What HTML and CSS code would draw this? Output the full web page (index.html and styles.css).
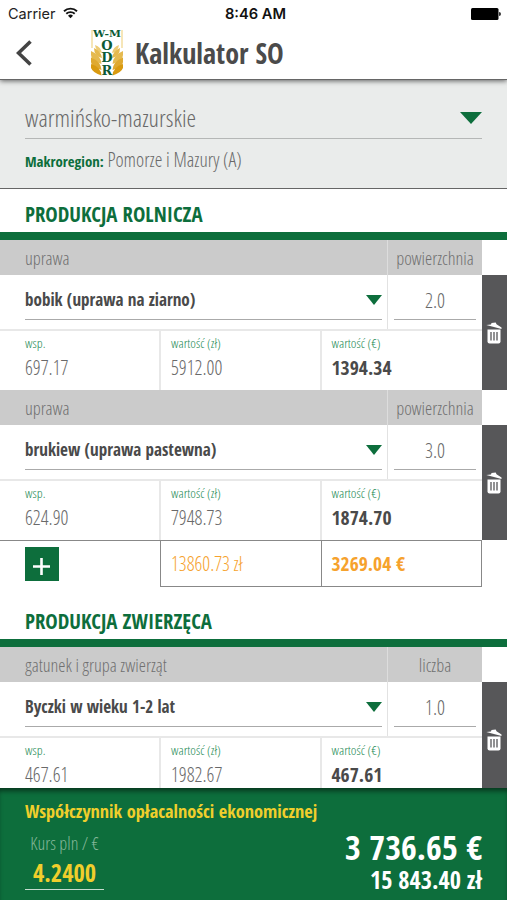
FILE: index.html
```html
<!DOCTYPE html>
<html lang="pl">
<head>
  <meta charset="UTF-8" />
  <meta name="viewport" content="width=device-width, initial-scale=1.0"/>
  <title>Kalkulator SO</title>
  <link rel="stylesheet" href="styles.css">
</head>
<body>

  <header class="top">
    <div class="status">
      <div class="carrier">
        <span>Carrier</span>
        <svg class="wifi" width="15" height="12" viewBox="0 0 15 12">
          <path d="M1 4.3a9.3 9.3 0 0 1 13 0M3.3 6.8a6 6 0 0 1 8.4 0" fill="none" stroke="#111" stroke-width="1.9"/>
          <path d="M7.5 11.3 5 8.8a3.6 3.6 0 0 1 5 0z" fill="#111"/>
        </svg>
      </div>
      <div class="clock">8:46 AM</div>
      <svg class="battery" width="30" height="12" viewBox="0 0 30 12">
        <rect width="27.5" height="12" rx="1.5" fill="#000"/>
        <path d="M28 4q2 0 2 2t-2 2z" fill="#333"/>
      </svg>
    </div>
    <div class="navbar">
      <svg class="back" width="17" height="26" viewBox="0 0 17 26">
        <path d="M14.5 1.5 2.5 13l12 11.5" fill="none" stroke="#444" stroke-width="3.6"/>
      </svg>
      <svg class="logo" width="32" height="48" viewBox="0 0 32 48">
        <path d="M0 1h2v18H0zM30 1h2v18h-2z" fill="#f6e6b8"/>
        <g id="ear">
          <path d="M4 16q6 2 7 8-6-1-7-8z" fill="#eccb74"/>
          <path d="M3 19q7 3 8 10-8-2-8-10z" fill="#e5b94e"/>
          <path d="M0 22q10 4 10.500 13Q0 32 0 26z" fill="#e5ba50"/>
          <path d="M0 28.500q10 4 10.500 12.500Q0 38 0 33z" fill="#dfa930"/>
          <path d="M0 35q10 3 10.500 11.500Q2 44 0 39z" fill="#d99a10"/>
        </g>
        <use href="#ear" transform="matrix(-1 0 0 1 32 0)"/>
        <text class="logo-wm" x="16" y="7.5" textLength="28" lengthAdjust="spacingAndGlyphs">W-M</text>
        <text class="logo-odr" x="16" y="20.5">O</text>
        <text class="logo-odr" x="16" y="33">D</text>
        <text class="logo-odr" x="16" y="46">R</text>
      </svg>
      <h1>Kalkulator SO</h1>
    </div>
  </header>

  <section class="region">
    <div class="region-select">
      <span>warmińsko-mazurskie</span>
      <i class="arrow big"></i>
    </div>
    <p class="macro"><b>Makroregion:</b> <span>Pomorze i Mazury (A)</span></p>
  </section>

  <main>
    <h2>PRODUKCJA ROLNICZA</h2>

    <div class="item">
      <div class="labels"><span>uprawa</span><span>powierzchnia</span></div>
      <div class="content">
        <div class="data">
          <div class="choice">
            <div class="select"><span class="name">bobik (uprawa na ziarno)</span><i class="arrow"></i></div>
            <div class="amount"><span>2.0</span></div>
          </div>
          <div class="values">
            <div><small>wsp.</small><span>697.17</span></div>
            <div><small>wartość (zł)</small><span>5912.00</span></div>
            <div><small>wartość (€)</small><b>1394.34</b></div>
          </div>
        </div>
        <div class="remove">
          <svg width="16" height="22" viewBox="0 0 16 22">
            <path d="M.3 3 5 2.600 5.500 1l4.200-.5.8 1.800 5 3.200v1.500z" fill="#fff"/>
            <path d="M1.500 7.500h13v12q0 2-2 2h-9q-2 0-2-2z" fill="#fff"/>
            <path d="M5 10v8.500M8 10v8.500M11 10v8.500" stroke="#575759" stroke-width="1.3"/>
          </svg>
        </div>
      </div>
    </div>

    <div class="item">
      <div class="labels"><span>uprawa</span><span>powierzchnia</span></div>
      <div class="content">
        <div class="data">
          <div class="choice">
            <div class="select"><span class="name">brukiew (uprawa pastewna)</span><i class="arrow"></i></div>
            <div class="amount"><span>3.0</span></div>
          </div>
          <div class="values">
            <div><small>wsp.</small><span>624.90</span></div>
            <div><small>wartość (zł)</small><span>7948.73</span></div>
            <div><small>wartość (€)</small><b>1874.70</b></div>
          </div>
        </div>
        <div class="remove">
          <svg width="16" height="22" viewBox="0 0 16 22">
            <path d="M.3 3 5 2.600 5.500 1l4.200-.5.8 1.800 5 3.200v1.500z" fill="#fff"/>
            <path d="M1.500 7.500h13v12q0 2-2 2h-9q-2 0-2-2z" fill="#fff"/>
            <path d="M5 10v8.500M8 10v8.500M11 10v8.500" stroke="#575759" stroke-width="1.3"/>
          </svg>
        </div>
      </div>
    </div>

    <div class="total">
      <div class="add">
        <svg width="34" height="34" viewBox="0 0 34 34">
          <path d="M8 19.500h17M16.500 11v17" stroke="#fff" stroke-width="2.6"/>
        </svg>
      </div>
      <div class="sum"><span>13860.73 zł</span></div>
      <div class="sum"><b>3269.04 €</b></div>
    </div>

    <h2>PRODUKCJA ZWIERZĘCA</h2>

    <div class="item">
      <div class="labels"><span>gatunek i grupa zwierząt</span><span>liczba</span></div>
      <div class="content">
        <div class="data">
          <div class="choice">
            <div class="select"><span class="name">Byczki w wieku 1-2 lat</span><i class="arrow"></i></div>
            <div class="amount"><span>1.0</span></div>
          </div>
          <div class="values">
            <div><small>wsp.</small><span>467.61</span></div>
            <div><small>wartość (zł)</small><span>1982.67</span></div>
            <div><small>wartość (€)</small><b>467.61</b></div>
          </div>
        </div>
        <div class="remove">
          <svg width="16" height="22" viewBox="0 0 16 22">
            <path d="M.3 3 5 2.600 5.500 1l4.200-.5.8 1.800 5 3.200v1.500z" fill="#fff"/>
            <path d="M1.500 7.500h13v12q0 2-2 2h-9q-2 0-2-2z" fill="#fff"/>
            <path d="M5 10v8.500M8 10v8.500M11 10v8.500" stroke="#575759" stroke-width="1.3"/>
          </svg>
        </div>
      </div>
    </div>
  </main>

  <footer>
    <h3>Współczynnik opłacalności ekonomicznej</h3>
    <div class="summary">
      <div class="rate">
        <span>Kurs pln / €</span>
        <b>4.2400</b>
      </div>
      <div class="result">
        <b class="eur">3 736.65 €</b>
        <b class="pln">15 843.40 zł</b>
      </div>
    </div>
  </footer>

</body>
</html>
```

FILE: styles.css
```css
* {
  box-sizing: border-box;
}

body {
  margin: 0;
  height: 900px;
  display: flex;
  flex-direction: column;
  overflow: hidden;
  background: #fff;
  color: #696969;
  font-family: "Open Sans Condensed Light", "Open Sans", sans-serif;
  font-stretch: 75%;
  font-weight: 300;
}

h1, h2, h3, p {
  margin: 0;
}

h1, h2, h3, b, .name {
  font-family: "Open Sans Condensed", "Open Sans", sans-serif;
  font-weight: 700;
}

/* header */
.top {
  flex: none;
  height: 80px;
  background: #fff;
  border-bottom: 1px solid #666;
  box-shadow: 0 1px 5px rgba(0, 0, 0, 0.6);
  z-index: 2;
}

.status {
  height: 27px;
  display: grid;
  grid-template-columns: 1fr auto 1fr;
  align-items: center;
  padding: 0 6px 0 8px;
  font-family: Inter, "Liberation Sans", sans-serif;
  font-stretch: 100%;
  font-size: 14.5px;
  color: #222;
}

.carrier {
  display: flex;
  align-items: center;
  gap: 7px;
  font-weight: 400;
}

.wifi {
  margin-top: -2px;
}

.clock {
  font-weight: 600;
  font-size: 14.7px;
  padding-left: 2px;
  color: #111;
}

.battery {
  justify-self: end;
}

.navbar {
  display: flex;
  align-items: center;
  height: 52px;
  padding-left: 16px;
}

.logo {
  margin: 0 12px 0 58px;
}

.logo-wm, .logo-odr {
  font-family: "DejaVu Serif", serif;
  font-weight: 700;
  font-stretch: 100%;
  fill: #0b5a35;
  text-anchor: middle;
}

.logo-wm {
  font-size: 9px;
}

.logo-odr {
  font-size: 13px;
}

h1 {
  font-size: 28px;
  line-height: 50px;
  color: #4b4b4b;
}

/* region */
.region {
  flex: none;
  height: 109px;
  padding: 18px 25px 0;
  background: #eaeceb;
  border-bottom: 1px solid #666;
}

.region-select {
  display: flex;
  align-items: center;
  justify-content: space-between;
  height: 41px;
  padding-bottom: 1px;
  border-bottom: 1px solid #b5b7b6;
  font-size: 24.5px;
}

.arrow {
  border-left: 8px solid transparent;
  border-right: 8px solid transparent;
  border-top: 10px solid #0d6e3c;
}

.arrow.big {
  border-left-width: 11px;
  border-right-width: 11px;
  border-top-width: 12px;
}

.macro {
  font-size: 19.6px;
  line-height: 42px;
}

.macro b {
  font-size: 14.8px;
  color: #0d6e3c;
}

/* production lists */
main {
  flex: 1;
  min-height: 0;
  overflow: hidden;
}

h2 {
  height: 51px;
  border-bottom: 8px solid #0d6e3c;
  padding-left: 25px;
  font-size: 20.8px;
  line-height: 50px;
  color: #0d6e3c;
}

.labels {
  display: flex;
  width: 482px;
  height: 35px;
  background: #cbcbcb;
  font-size: 18.4px;
  line-height: 35px;
  color: #707070;
}

.labels span:first-child {
  flex: 1;
  padding-left: 25px;
}

.labels span:last-child {
  width: 95px;
  border-left: 1px solid #ddd;
  text-align: center;
}

.content {
  display: flex;
  height: 115px;
}

.data {
  width: 482px;
}

.choice {
  display: flex;
  height: 56px;
  border-bottom: 2px solid #e8e8e8;
}

.select {
  flex: 1;
  height: 45px;
  margin: 0 5px 0 25px;
  display: flex;
  justify-content: space-between;
  border-bottom: 1px solid #aaa;
}

.name {
  font-size: 17.1px;
  line-height: 50px;
  color: #4a4a4a;
}

.select .arrow {
  margin-top: 20px;
  height: 10px;
}

.amount {
  width: 95px;
  border-left: 1px solid #e2e2e2;
  padding: 0 6px;
}

.amount span {
  display: block;
  height: 45px;
  border-bottom: 1px solid #aaa;
  text-align: center;
  font-size: 20px;
  line-height: 51px;
}

.values {
  display: grid;
  grid-template-columns: 161px 161px 160px;
  height: 59px;
}

.values div {
  padding: 2px 0 0 10px;
  border-right: 2px solid #e8e8e8;
}

.values div:first-child {
  padding-left: 25px;
}

.values div:last-child {
  padding-left: 9.5px;
  border-right: 0;
}

.values small {
  display: block;
  font-size: 13.6px;
  line-height: 20px;
  color: #1c8a54;
}

.values span, .values b {
  display: block;
  font-size: 19.7px;
  line-height: 30px;
}

.values b {
  color: #4a4a4a;
}

.remove {
  width: 25px;
  padding-right: 1px;
  background: #575759;
  display: flex;
  align-items: center;
  justify-content: center;
}

.total {
  display: grid;
  grid-template-columns: 160px 162px 160px;
  width: 482px;
  height: 47px;
  margin-bottom: 9px;
  border-top: 1px solid #888;
}

.add {
  width: 34px;
  height: 34px;
  margin: 6px 0 0 25px;
  background: #0d6e3c;
}

.sum {
  height: 46px;
  padding-left: 10px;
  border: 1px solid #888;
  border-top: 0;
  font-size: 19.6px;
  line-height: 45px;
  color: #f6a22d;
}

.sum + .sum {
  padding-left: 9.5px;
  border-left: 0;
}

/* footer */
footer {
  flex: none;
  height: 112px;
  padding: 7px 25px 0;
  background: #0d6e3c;
  box-shadow: inset 0 5px 5px -2px rgba(0, 0, 0, 0.5);
}

h3 {
  font-size: 18.3px;
  line-height: 32px;
  color: #f0ce2c;
}

.summary {
  display: flex;
  justify-content: space-between;
}

.rate {
  width: 79px;
  height: 63px;
  border-bottom: 1px solid #c5dccf;
  text-align: center;
  white-space: nowrap;
}

.rate span {
  display: block;
  font-size: 18.2px;
  line-height: 32px;
  color: #85b89b;
}

.rate b {
  display: block;
  font-size: 24.4px;
  line-height: 27px;
  color: #f0ce2c;
}

.result {
  color: #fff;
  text-align: right;
}

.result b {
  display: block;
}

.eur {
  font-size: 34.2px;
  line-height: 40px;
}

.pln {
  font-size: 24.2px;
  line-height: 26px;
}
```
